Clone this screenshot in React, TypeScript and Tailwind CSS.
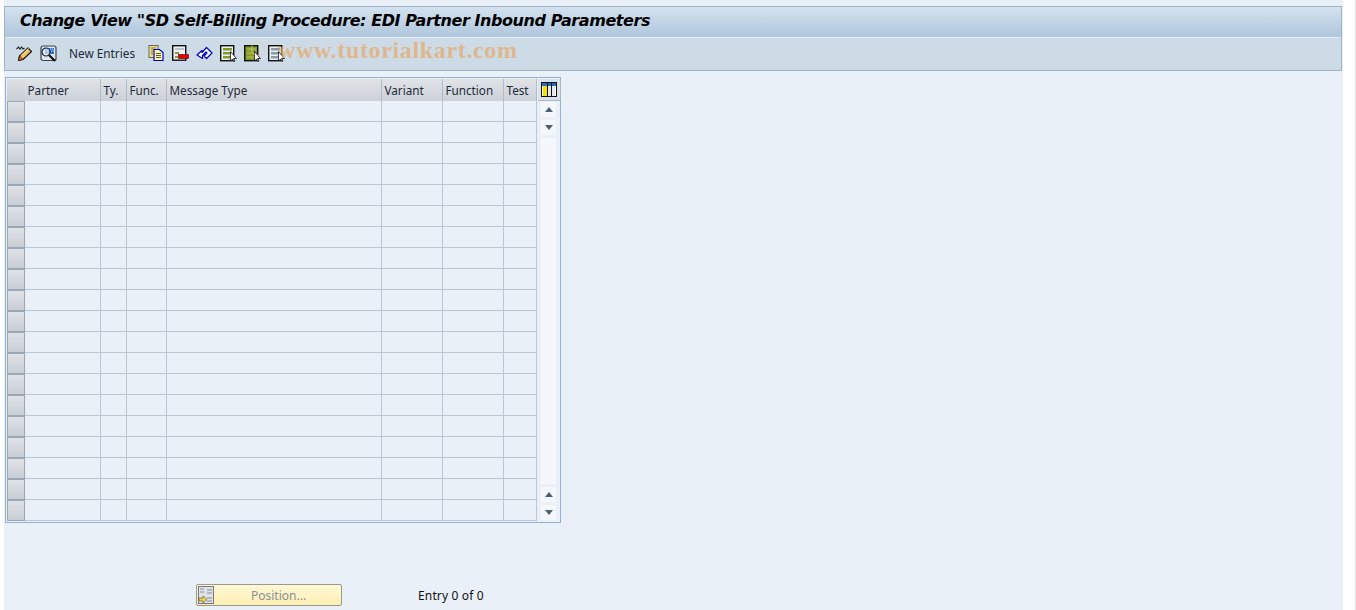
const columns = [
  { label: "Partner", width: "w-[76px]" },
  { label: "Ty.", width: "w-[26px]" },
  { label: "Func.", width: "w-[40px]" },
  { label: "Message Type", width: "w-[215px]" },
  { label: "Variant", width: "w-[61px]" },
  { label: "Function", width: "w-[61px]" },
  { label: "Test", width: "w-[33px]" },
];

const rows = Array.from({ length: 20 }, (_, i) => i);

const EditIcon = () => (
  <svg width="17" height="17" viewBox="0 0 17 17">
    <path d="M0.500 4l2-2 1.500 2 1.500-2 1.500 2 1.500-1" fill="none" stroke="#222" strokeWidth="1.100" />
    <path d="M2.500 15.500l1-4.500 8.500-8 3.500 3.500-8.500 8z" fill="#f6c25a" stroke="#1a1a1a" strokeWidth="1.200" strokeLinejoin="round" />
    <path d="M2.500 15.500l1-4.500 3.500 3.500z" fill="#ee6a20" stroke="#1a1a1a" strokeWidth="0.800" />
    <path d="M5 10.500l7.500-7" stroke="#fff3c4" strokeWidth="1" />
  </svg>
);

const DisplayIcon = () => (
  <svg width="17" height="17" viewBox="0 0 17 17">
    <rect x="1" y="1" width="15" height="14.500" rx="2" fill="#dfe6ee" stroke="#39434f" strokeWidth="1.200" />
    <rect x="5" y="3" width="9" height="6" fill="#2f6fd8" />
    <path d="M6 4h1M8 4h1M10 4h1M12 4h1M7 6h1M9 6h1M11 6h1M13 6h1" stroke="#cfe2fa" />
    <circle cx="6" cy="7" r="4" fill="#d8e6f2" fillOpacity="0.75" stroke="#1d2530" strokeWidth="1.200" />
    <path d="M9 10l6 6" stroke="#111" strokeWidth="2.200" />
  </svg>
);

const CopyIcon = () => (
  <svg width="17" height="16" viewBox="0 0 17 16">
    <rect x="1" y="0.500" width="9" height="12" fill="#f7e070" stroke="#666" />
    <path d="M3 3h5M3 5h2M3 7h2M3 9h2" stroke="#777" />
    <path d="M6 4.500h5.500l3.500 3v8H6z" fill="#fff6a8" stroke="#0000c8" strokeWidth="1.200" />
    <path d="M8 8.500h5M8 10.500h5M8 12.500h5" stroke="#555" />
  </svg>
);

const DeleteIcon = () => (
  <svg width="17" height="16" viewBox="0 0 17 16">
    <rect x="0.700" y="0.700" width="13" height="14.500" fill="#eef1f4" stroke="#111" strokeWidth="1.400" />
    <path d="M3 3h9v2H3z" fill="#b9c4cc" />
    <path d="M3 7h4v2H3zM3 11h3v2H3z" fill="#7f9a3a" />
    <rect x="6.500" y="9.500" width="10" height="4" fill="#e00000" stroke="#600" strokeWidth="0.600" />
  </svg>
);

const UndoIcon = () => (
  <svg width="17" height="16" viewBox="0 0 17 16">
    <path
      d="M1 10l5-4.500v2l4.500-5 5.500 5.500-5.500 5.500-2.500-2.500 3-3-1-1-3.500 3.500v3z"
      fill="#fff"
      stroke="#0000b8"
      strokeWidth="1.200"
      strokeLinejoin="round"
    />
  </svg>
);

const SelectIcon = ({ fill, band }: { fill: string; band: string }) => (
  <svg width="17" height="17" viewBox="0 0 17 17">
    <rect x="0.700" y="0.700" width="13" height="15" fill={fill} stroke="#111" strokeWidth="1.400" />
    <path d="M3 3h9v2.500H3zM3 7h9v2.500H3zM3 11h9v2.500H3z" fill={band} />
    <path d="M10.500 6.500v9.500l2-2 1.500 2.500 1-0.600-1.500-2.400h3z" fill="#fff" stroke="#111" strokeWidth="0.800" />
  </svg>
);

const ColumnsIcon = () => (
  <svg width="16" height="15" viewBox="0 0 16 15">
    <rect x="0.500" y="0.500" width="15" height="14" fill="#fff" stroke="#111" />
    <rect x="1" y="1" width="14" height="3" fill="#2a6ac0" />
    <rect x="2" y="4" width="4" height="10" fill="#f8e000" />
    <rect x="7" y="4" width="3" height="10" fill="#e8e8e8" />
    <rect x="11" y="4" width="3" height="10" fill="#e8e8e8" />
    <path d="M6.500 1v13M10.500 1v13" stroke="#111" />
  </svg>
);

const PositionIcon = () => (
  <svg width="16" height="18" viewBox="0 0 16 18">
    <rect x="0.500" y="0.500" width="15" height="17" fill="#dfe3e8" stroke="#777" />
    <path d="M9 4h5M9 7h5M9 12h5M9 15h5" stroke="#889" />
    <path d="M2 3h4M2 6h4" stroke="#889" />
    <path d="M1 12h4v-2l4 3.500-4 3.500v-2H1z" fill="#f5d040" stroke="#665" strokeWidth="0.700" />
  </svg>
);

const ScrollButton = ({ up }: { up?: boolean }) => (
  <div className="flex h-[15px] w-[15px] items-center justify-center bg-[#f4f7fb]">
    <div
      className={
        up
          ? "h-0 w-0 border-x-[4px] border-b-[5px] border-x-transparent border-b-[#4a5f72]"
          : "h-0 w-0 border-x-[4px] border-t-[5px] border-x-transparent border-t-[#4a5f72]"
      }
    />
  </div>
);

export default function App() {
  return (
    <div className="flex h-[610px] w-[1356px] overflow-hidden bg-white font-['Noto_Sans','DejaVu_Sans',sans-serif] text-[12px] text-[#1d2a3a]">
      <div className="ml-[4px] flex h-full w-[1339px] flex-col bg-[#e9f0f7] pt-[6px]">
        <div className="mr-[1px] border border-[#9fb3c8]">
          <div className="flex h-[30px] items-center bg-gradient-to-b from-[#d4e2ee] to-[#afc6dc] pb-[2px] pl-[15px] font-['DejaVu_Sans',sans-serif] text-[16px] font-bold italic tracking-[-0.43px] text-black">
            Change View "SD Self-Billing Procedure: EDI Partner Inbound Parameters
          </div>
          <div className="relative flex h-[33px] items-center border-t border-[#e6eef5] bg-[#cddbe6] pb-[2px] pl-[11px]">
            <EditIcon />
            <div className="ml-[7px]">
              <DisplayIcon />
            </div>
            <span className="ml-[12px] mt-[2px] text-[11.8px]">New Entries</span>
            <div className="ml-[13px] flex items-center gap-[7px]">
              <CopyIcon />
              <DeleteIcon />
              <UndoIcon />
              <SelectIcon fill="#eef1f4" band="#7f9a2a" />
              <SelectIcon fill="#7f9a2a" band="#a0b040" />
              <SelectIcon fill="#eef1f4" band="#8a9aa8" />
            </div>
            <div className="absolute left-[273px] top-[-6px] font-['Liberation_Serif',serif] text-[24px] font-bold tracking-[0.65px] text-[#e8a868] opacity-70">
              www.tutorialkart.com
            </div>
            <div className="absolute left-[246px] top-[3px] h-[15px] w-[15px] rounded-full border border-[#e8c8a8] opacity-70" />
          </div>
        </div>

        <div className="ml-[1px] mt-[6px] flex w-[556px] border border-[#93b2d2] p-[1px]">
          <div className="w-[530px]">
            <div className="flex h-[22px]">
              <div className="w-[18px] bg-gradient-to-b from-[#dde1e6] to-[#c9ced4]" />
              {columns.map((col) => (
                <div
                  key={col.label}
                  className={`${col.width} flex items-center border-r border-[#b0bccb] bg-gradient-to-b from-[#e0e4e9] to-[#ccd1d7] pl-[2.500px] pt-[2px] text-[11.7px] leading-none`}
                >
                  {col.label}
                </div>
              ))}
            </div>
            {rows.map((row) => (
              <div key={row} className="flex h-[21px]">
                <div className="w-[18px] border border-[#9aa7b5] bg-gradient-to-b from-[#dfe3e8] to-[#c9ced4]" />
                {columns.map((col) => (
                  <div
                    key={col.label}
                    className={`${col.width} border-b border-r border-[#bcc6d2]`}
                  />
                ))}
              </div>
            ))}
          </div>
          <div className="ml-[1px] flex w-[23px] flex-col items-center">
            <div className="flex h-[22px] w-[23px] items-center justify-center border-b border-r border-[#aab6c2] bg-[#dbe1e8]">
              <ColumnsIcon />
            </div>
            <div className="mr-[2px] mt-[1px] flex flex-1 flex-col gap-[3px] pb-[1px]">
              <ScrollButton up />
              <ScrollButton />
              <div className="flex-1 bg-[#f4f7fb]" />
              <ScrollButton up />
              <ScrollButton />
            </div>
          </div>
        </div>

        <div className="ml-[192px] mt-[61px] flex items-center">
          <div className="flex h-[22px] w-[146px] items-center rounded-[2px] border border-[#9a9a90] bg-gradient-to-b from-[#fff8d8] to-[#fdeeb0] pl-[1px]">
            <PositionIcon />
            <span className="ml-[37px] mt-[2px] text-[#8a8f9a]">Position...</span>
          </div>
          <span className="ml-[76px] mt-[2px] tracking-[0.15px] text-[#111]">Entry 0 of 0</span>
        </div>
      </div>
      <div className="ml-[12px] h-full w-[1px] bg-[#e4e4e8]" />
    </div>
  );
}
